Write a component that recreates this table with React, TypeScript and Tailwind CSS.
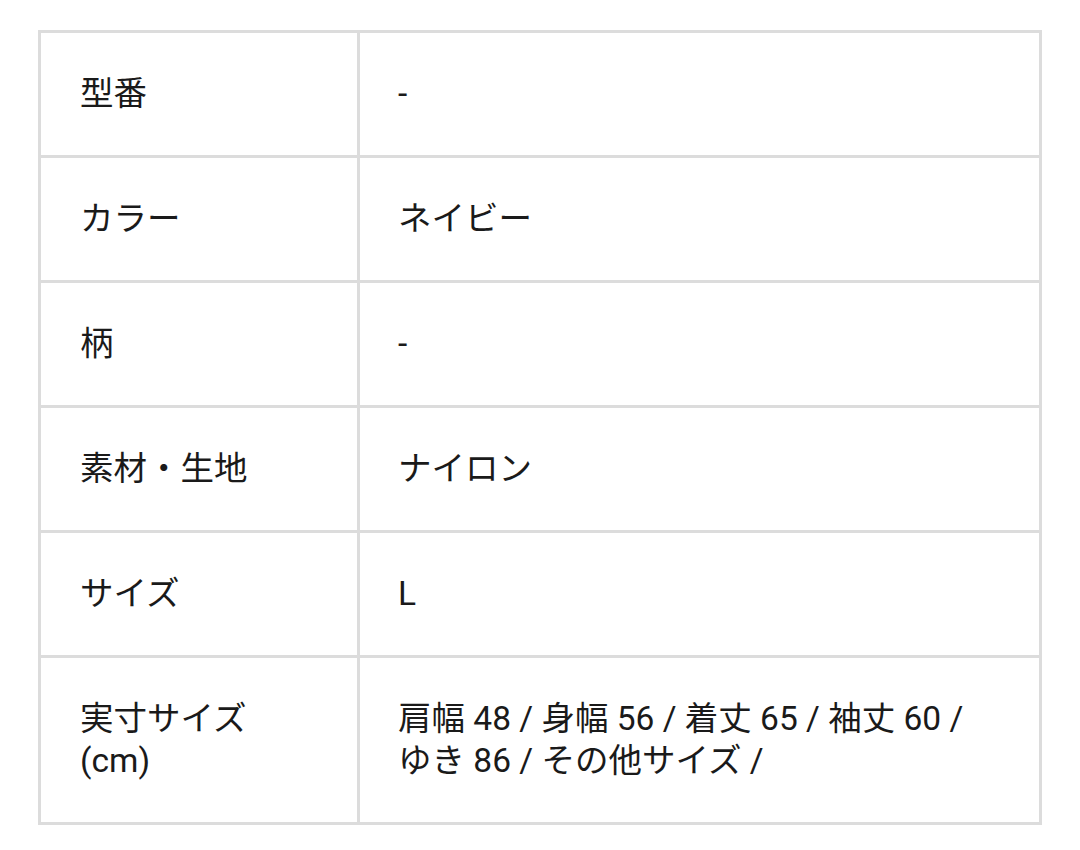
const rows: { label: React.ReactNode; value: React.ReactNode }[] = [
  { label: '型番', value: '-' },
  { label: 'カラー', value: 'ネイビー' },
  { label: '柄', value: '-' },
  { label: '素材・生地', value: 'ナイロン' },
  { label: 'サイズ', value: 'L' },
  {
    label: (
      <>
        実寸サイズ
        <br />
        (cm)
      </>
    ),
    value: (
      <>
        肩幅 48 / 身幅 56 / 着丈 65 / 袖丈 60 /
        <br />
        ゆき 86 / その他サイズ /
      </>
    ),
  },
];

export default function App() {
  return (
    <div
      className="min-h-screen bg-white pl-[38px] pt-[30px]"
      style={{ fontFamily: 'Roboto, "Noto Sans CJK JP", sans-serif' }}
    >
      <table className="w-[1004px] border-collapse text-[33.5px] leading-[42px] text-[#1a1a1a]">
        <tbody>
          {rows.map((row, i) => (
            <tr key={i}>
              <td className="w-[319px] border-[3px] border-[#dcdcdc] px-[39px] py-[40px] align-middle">
                {row.label}
              </td>
              <td className="border-[3px] border-[#dcdcdc] px-[38px] py-[40px] align-middle">
                {row.value}
              </td>
            </tr>
          ))}
        </tbody>
      </table>
    </div>
  );
}
